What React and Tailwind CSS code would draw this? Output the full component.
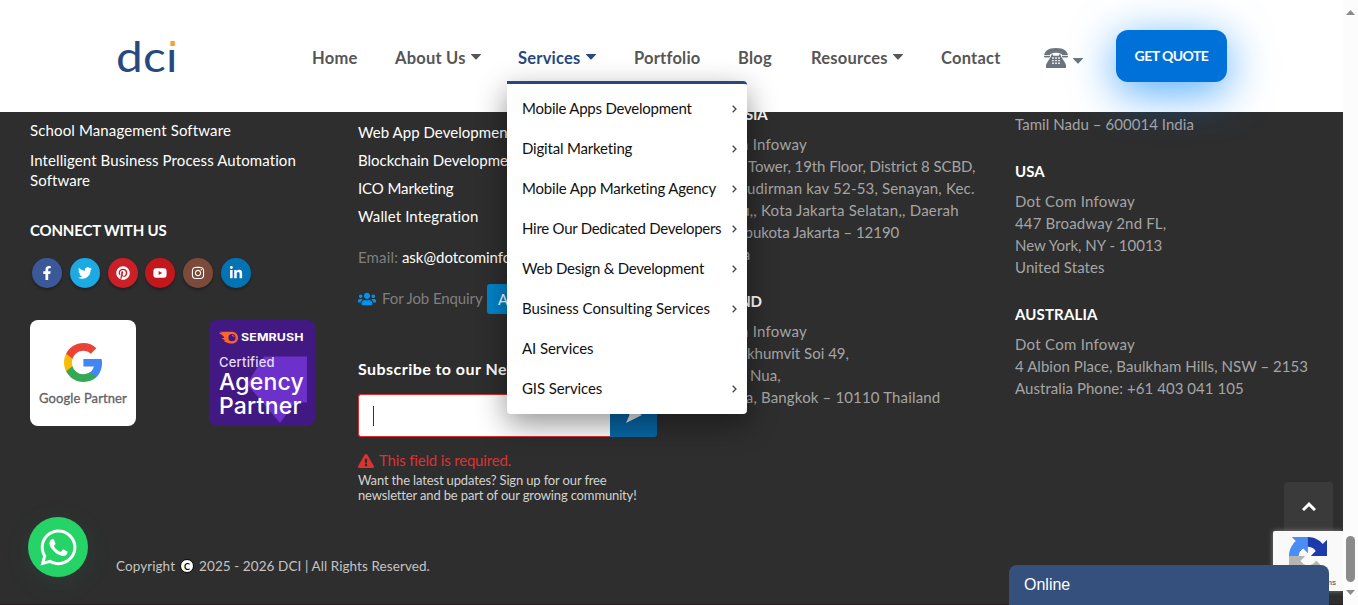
import React from 'react';
import {
  FaFacebookF, FaTwitter, FaPinterest, FaYoutube, FaInstagram, FaLinkedinIn,
  FaUsers, FaExclamationTriangle, FaWhatsapp,
} from 'react-icons/fa';

const NAV = [
  { label: 'Home', width: 'w-[83px]' },
  { label: 'About Us', width: 'w-[123px]', menu: true },
  { label: 'Services', width: 'w-[116px]', menu: true, active: true },
  { label: 'Portfolio', width: 'w-[104px]' },
  { label: 'Blog', width: 'w-[73px]' },
  { label: 'Resources', width: 'w-[130px]', menu: true },
  { label: 'Contact', width: 'w-[103px]' },
];

const SERVICES = [
  { label: 'Mobile Apps Development', sub: true, track: 'tracking-[-0.24px]' },
  { label: 'Digital Marketing', sub: true, track: 'tracking-[-0.18px]' },
  { label: 'Mobile App Marketing Agency', sub: true, track: 'tracking-[-0.18px]' },
  { label: 'Hire Our Dedicated Developers', sub: true, track: 'tracking-[-0.27px]' },
  { label: 'Web Design & Development', sub: true, track: 'tracking-[-0.23px]' },
  { label: 'Business Consulting Services', sub: true, track: 'tracking-[-0.06px]' },
  { label: 'AI Services', sub: false, track: 'tracking-[-0.1px]' },
  { label: 'GIS Services', sub: true, track: 'tracking-[-0.1px]' },
];

const SOCIAL = [
  { Icon: FaFacebookF, bg: 'bg-[#3b5998]' },
  { Icon: FaTwitter, bg: 'bg-[#1da9e1]' },
  { Icon: FaPinterest, bg: 'bg-[#cb2027]' },
  { Icon: FaYoutube, bg: 'bg-[#c4171d]' },
  { Icon: FaInstagram, bg: 'bg-[#7c4a3a]' },
  { Icon: FaLinkedinIn, bg: 'bg-[#0274b3]' },
];

function Caret() {
  return (
    <svg width="10" height="6" viewBox="0 0 10 6" fill="currentColor" className="shrink-0">
      <path d="M.4 0h9.200c.4 0 .5.4.2.7L5.600 5.300c-.4.4-.8.4-1.200 0L.2.7C-.1.4 0 0 .4 0z" />
    </svg>
  );
}

function Telephone() {
  return (
    <svg width="24" height="20" viewBox="0 0 24 20" fill="#6c757d">
      <path d="M0 8.600C0 3.200 4 0 12 0s12 3.200 12 8.600c0 .5-.3.8-.8.8h-4.400c-.5 0-.8-.3-.8-.8V6.500C16.500 5.300 14.500 4.800 12 4.800S7.500 5.300 6 6.500v2.100c0 .5-.3.8-.8.8H.8c-.5 0-.8-.3-.8-.8z" />
      <path d="M7.300 6.400h1.800v1.400h5.800V6.400h1.800v1.400l4.700 7.600c.4.7.6 1.200.6 2V20H2v-2.600c0-.8.2-1.300.6-2l4.700-7.600z" />
      <path fill="#fff" d="M8.200 9.300h1.600v1.400H8.200zM11.200 9.300h1.600v1.400h-1.600zM14.200 9.300h1.600v1.400h-1.600zM8.200 11.900h1.600v1.400H8.200zM11.200 11.900h1.600v1.400h-1.600zM14.200 11.900h1.600v1.400h-1.600zM8.200 14.500h1.600v1.400H8.200zM11.200 14.500h1.600v1.400h-1.600zM14.200 14.500h1.600v1.400h-1.600z" />
      <path fill="none" stroke="#fff" strokeWidth="0.8" d="M0 7.500h6.200M17.800 7.500H24" />
    </svg>
  );
}

function ServicesMenu() {
  return (
    <div className="absolute left-[507px] top-[81px] z-20 w-[240px] rounded-[4px] rounded-tl-none border-t-[3px] border-[#26477f] bg-white py-[5px] text-[15px] text-[#111] shadow-[0_10px_30px_rgba(0,0,0,0.42)]">
      {SERVICES.map((s) => (
        <div key={s.label} className="flex h-10 items-center justify-between pl-[15px] pr-[10px]">
          <span className={`whitespace-nowrap pb-[2px] ${s.track}`}>{s.label}</span>
          {s.sub && (
            <svg width="5" height="8" viewBox="0 0 5 8" fill="none" stroke="#444" strokeWidth="1.3">
              <path d="M.7.7 4 4 .7 7.300" />
            </svg>
          )}
        </div>
      ))}
    </div>
  );
}

function Header() {
  return (
    <header className="relative z-10 flex h-28 w-[1343px] shrink-0 bg-white">
      <div className="w-[312px] pl-[115.500px] pt-[32px] text-[43px] leading-[48px] text-[#27497f]">
        <div className="flex w-[60px] origin-left scale-x-[1.11] tracking-[0.2px]">
          <span>dc</span>
          <span className="relative">
            ı
            <span className="absolute left-[3.500px] top-[9px] h-[5px] w-[4px] bg-[#fb9f2d]" />
          </span>
        </div>
      </div>
      <nav className="flex h-28 items-center text-[16.500px] font-bold leading-6 tracking-[0.22px] text-[#565656]">
        {NAV.map((n) => (
          <div key={n.label} className={`flex items-center gap-[5px] pt-[1px] ${n.width} ${n.active ? 'text-[#27497f]' : ''}`}>
            <span className="whitespace-nowrap pt-[2px]">{n.label}</span>
            {n.menu && <Caret />}
          </div>
        ))}
      </nav>
      <div className="flex items-start gap-[5px] pt-[48px] text-[#6c757d]">
        <Telephone />
        <span className="pt-[10px]"><Caret /></span>
      </div>
      <button className="ml-[33px] mt-[30px] h-[52px] w-[111px] rounded-[12px] bg-[#0071d8] pb-[2px] text-[14px] font-bold tracking-[-0.55px] text-white shadow-[0_10px_45px_rgba(0,132,255,0.7)]">
        GET QUOTE
      </button>
    </header>
  );
}

function GooglePartner() {
  return (
    <div className="flex h-[106px] w-[106px] flex-col items-center rounded-[8px] bg-white pt-[23px]">
      <svg width="38" height="39" viewBox="1 1 21.560 22">
        <path fill="#4285f4" d="M22.56 12.25c0-.78-.07-1.53-.2-2.25H12v4.26h5.92c-.26 1.37-1.04 2.53-2.21 3.31v2.77h3.57c2.08-1.92 3.28-4.74 3.28-8.09z" />
        <path fill="#34a853" d="M12 23c2.97 0 5.46-.98 7.28-2.66l-3.57-2.77c-.98.66-2.23 1.06-3.71 1.06-2.86 0-5.29-1.93-6.16-4.53H2.18v2.84C3.99 20.53 7.7 23 12 23z" />
        <path fill="#fbbc05" d="M5.84 14.09c-.22-.66-.35-1.36-.35-2.09s.13-1.43.35-2.09V7.07H2.18C1.43 8.55 1 10.22 1 12s.43 3.45 1.18 4.93l2.85-2.22.81-.62z" />
        <path fill="#ea4335" d="M12 5.38c1.62 0 3.06.56 4.21 1.64l3.15-3.15C17.45 2.09 14.97 1 12 1 7.7 1 3.99 3.47 2.18 7.07l3.66 2.84c.87-2.6 3.3-4.53 6.16-4.53z" />
      </svg>
      <span className="mt-[8px] whitespace-nowrap text-[13px] leading-4 tracking-[0.1px] text-[#5f6368] [-webkit-text-stroke:0.3px_#5f6368]">Google Partner</span>
    </div>
  );
}

function SemrushPartner() {
  return (
    <div className="relative h-[106px] w-[106px] rounded-[8px] bg-[#421983] pl-[10px] pt-[10px] text-white [font-family:Inter,sans-serif]">
      <svg className="absolute left-0 top-0" width="106" height="106" viewBox="0 0 106 106">
        <path fill="#6d31cb" d="M55 36.500h43v46H86L71 103 38 64z" />
      </svg>
      <div className="relative flex items-center">
        <svg width="19" height="13" viewBox="0 0 19 13">
          <path fill="#ff642d" fillRule="evenodd" d="M.5.800h12C16.500.800 19 3.300 19 6.700s-2.600 5.800-6 5.800c-3 0-5.200-.9-7.800-2.300-.7-.4-.5-.9.200-.8l1.400.1L3.300 7.800c-.8-.4-.5-1 .2-.9l1.800.2C5 5.600 3.200 4 .6 2.600-.1 2.200 0 1.500.8 1.700l3 .5zM13 3.100a3.600 3.600 0 1 0 0 7.200 3.600 3.600 0 0 0 0-7.200z" />
          <path fill="#ff642d" d="M13 4c1.600 0 2.700 1.100 2.700 2.600-.7-.9-1.500-1.400-2.700-1.600z" />
        </svg>
        <span className="ml-[2.500px] origin-left scale-x-[1.24] text-[10px] font-bold leading-[14px] tracking-[0.1px]">SEMRUSH</span>
      </div>
      <div className="relative mt-[9px] text-[13px] font-medium leading-[18px] tracking-[0.2px] text-[#e6dcf5]">Certified</div>
      <div className="relative -mt-px text-[23px] font-medium leading-[24px] tracking-[0.2px]">
        <div>Agency</div>
        <div>Partner</div>
      </div>
    </div>
  );
}

function ProductsColumn() {
  return (
    <div className="pt-[8px] text-[15px] leading-5 text-white">
      <div className="tracking-[0.13px]">School Management Software</div>
      <div className="mt-[10px] w-[290px] tracking-[0.1px]">Intelligent Business Process Automation Software</div>
      <div className="mt-[30px] font-bold tracking-[-0.17px]">CONNECT WITH US</div>
      <div className="mt-[18px] flex gap-[7.800px] pl-[2px]">
        {SOCIAL.map(({ Icon, bg }) => (
          <span key={bg} className={`flex h-[30px] w-[30px] items-center justify-center rounded-full text-[14px] shadow-[0_2px_3px_rgba(0,0,0,0.3)] ${bg}`}>
            <Icon />
          </span>
        ))}
      </div>
      <div className="mt-[32px] flex gap-[73px]">
        <GooglePartner />
        <SemrushPartner />
      </div>
    </div>
  );
}

function ContactColumn() {
  return (
    <div className="pt-[6px] text-[15px] leading-7 text-white">
      <div className="tracking-[0.05px]">Web App Development</div>
      <div>Blockchain Development</div>
      <div className="tracking-[-0.1px]">ICO Marketing</div>
      <div className="tracking-[0.12px]">Wallet Integration</div>
      <div className="mt-[13px]"><span className="tracking-[0.15px] text-[#7f7f7f]">Email:</span> ask@dotcominfoway.com</div>
      <div className="mt-[13px] flex h-[30px] items-center text-[#7f7f7f]">
        <FaUsers className="text-[18px] text-[#0092ec]" />
        <span className="ml-[6px] w-[105px] whitespace-nowrap pb-[2px] tracking-[-0.1px]">For Job Enquiry</span>
        <span className="h-[30px] rounded-[3px] bg-[#0084cb] px-[11px] leading-[30px] text-white">Apply</span>
      </div>
      <div className="mt-[43px] text-[16px] font-bold leading-6 tracking-[0.45px]">Subscribe to our Newsletter</div>
      <div className="mt-[13px] flex h-[43px]">
        <div className="flex w-[252px] items-center rounded-l-[3px] border border-r-0 border-[#dc3030] bg-white pl-[14px]">
          <span className="h-5 w-px bg-[#333]" />
        </div>
        <div className="flex w-[47px] items-center justify-center rounded-r-[3px] bg-[#0768a8]">
          <svg width="16" height="16" viewBox="0 0 16 16" fill="#e8edf1" className="mt-[-2px]">
            <path d="M0 0l16 8L0 16l3.500-8z" />
          </svg>
        </div>
      </div>
      <div className="mt-[14px] flex h-5 items-center gap-[5px] tracking-[-0.17px] text-[#dc3232]">
        <FaExclamationTriangle className="text-[16px]" />
        <span className="pb-[2px]">This field is required.</span>
      </div>
      <div className="mt-[2px] text-[13px] leading-[15px] tracking-[-0.15px] text-[#d2d2d2]">
        <div>Want the latest updates? Sign up for our free</div>
        <div>newsletter and be part of our growing community!</div>
      </div>
    </div>
  );
}

function Lead({ children, className }) {
  return <span className={`flex shrink-0 justify-end ${className}`}>{children}</span>;
}

function AsiaColumn() {
  return (
    <div className="-mt-[9px] whitespace-nowrap text-[15px] leading-[22px] text-[#a5a5a5]">
      <div className="font-bold tracking-[-0.28px] text-white">INDONESIA</div>
      <div className="mt-[8px] tracking-[0.28px]">Dot Com Infoway</div>
      <div className="flex tracking-[-0.08px]"><Lead className="w-[61px] pr-1">Revenue</Lead>Tower, 19th Floor, District 8 SCBD,</div>
      <div className="flex tracking-[0.18px]"><Lead className="w-[60px]">Jl Jen S</Lead>udirman kav 52-53, Senayan, Kec.</div>
      <div className="flex tracking-[0.23px]"><Lead className="w-[70px]">Kby Baru,,</Lead><span className="pl-[4px]">Kota Jakarta Selatan,, Daerah</span></div>
      <div className="flex"><Lead className="w-[66px]">Khusus Ib</Lead><span className="tracking-[-0.03px]">ukota Jakarta – 12190</span></div>
      <div>Indonesia</div>
      <div className="mt-[25px] font-bold tracking-[-0.25px] text-white">THAILAND</div>
      <div className="mt-[8px] tracking-[0.28px]">Dot Com Infoway</div>
      <div className="flex"><Lead className="w-[60px]">45/1 Su</Lead>khumvit Soi 49,</div>
      <div className="flex"><Lead className="w-[63px] pr-1">Klongtan</Lead>Nua,</div>
      <div className="flex tracking-[0.15px]"><Lead className="w-[70px]">Wattana,</Lead><span className="pl-[4px]">Bangkok – 10110 Thailand</span></div>
    </div>
  );
}

function OfficesColumn() {
  return (
    <div className="whitespace-nowrap pt-[1px] text-[15px] leading-[22px] text-[#a5a5a5]">
      <div className="tracking-[0.05px]">Tamil Nadu – 600014 India</div>
      <div className="mt-[25px] font-bold text-white">USA</div>
      <div className="mt-[8px] tracking-[0.28px]">Dot Com Infoway</div>
      <div className="tracking-[0.16px]">447 Broadway 2nd FL,</div>
      <div>New York, NY - 10013</div>
      <div className="tracking-[0.08px]">United States</div>
      <div className="mt-[25px] font-bold tracking-[0.15px] text-white">AUSTRALIA</div>
      <div className="mt-[8px] tracking-[0.28px]">Dot Com Infoway</div>
      <div className="tracking-[0.05px]">4 Albion Place, Baulkham Hills, NSW – 2153</div>
      <div className="tracking-[0.05px]">Australia Phone: +61 403 041 105</div>
    </div>
  );
}

function Recaptcha() {
  return (
    <div className="absolute left-[1273px] top-[531px] h-[60px] w-[70px] rounded-l-[2px] bg-[#f9f9f9] pl-[16px] pt-[6px] shadow-[0_0_5px_#808080]">
      <svg width="38" height="38" viewBox="0 0 64 64">
        <path fill="#1c3aa9" d="M64 31.955l-.033-1.370V4.687l-7.160 7.160C50.948 4.674 42.033.093 32.050.093c-10.400 0-19.622 4.960-25.458 12.640l11.736 11.860a15.550 15.550 0 0 1 4.754-5.334c2.050-1.600 4.952-2.906 8.968-2.906.485 0 .860.057 1.135.163 4.976.393 9.288 3.140 11.828 7.124l-8.307 8.307L64 31.953" />
        <path fill="#4a8df6" d="M31.862.094l-1.370.033H4.594l7.160 7.160C4.580 13.147 0 22.060 0 32.046c0 10.400 4.960 19.622 12.640 25.458L24.500 45.768a15.550 15.550 0 0 1-5.334-4.754c-1.600-2.050-2.906-4.952-2.906-8.968 0-.485.057-.860.163-1.135.393-4.976 3.140-9.288 7.124-11.828l8.307 8.307L31.860.095" />
        <path fill="#b5b5b5" d="M.001 32.045l.033 1.370v25.898l7.160-7.160c5.860 7.173 14.774 11.754 24.760 11.754 10.400 0 19.622-4.960 25.458-12.640l-11.736-11.860a15.550 15.550 0 0 1-4.754 5.334c-2.050 1.600-4.952 2.906-8.968 2.906-.485 0-.860-.057-1.135-.163-4.976-.393-9.288-3.140-11.828-7.124l8.307-8.307c-10.522.040-22.400.066-27.295-.005" />
      </svg>
      <div className="absolute right-[7px] top-[47px] whitespace-nowrap text-[8px] leading-[10px] text-[#444] [font-family:'Liberation_Sans',sans-serif]">Terms</div>
    </div>
  );
}

export default function App() {
  return (
    <div className="relative flex h-[605px] w-[1358px] overflow-hidden bg-[#fcfcfc] [font-family:Lato,sans-serif]">
      <div className="flex w-[1343px] flex-col">
        <Header />
        <footer className="flex h-[493px] flex-col border-b border-[#241f21] bg-[#2e2e2e]">
          <div className="grid h-[442px] grid-cols-[328px_329px_328px_328px] items-start pl-[30px]">
            <ProductsColumn />
            <ContactColumn />
            <AsiaColumn />
            <OfficesColumn />
          </div>
          <div className="flex h-6 items-center pl-[116px] text-[13.500px] text-[#c4c4c4]">
            <span className="tracking-[0.08px]">Copyright</span>
            <span className="ml-[5px] mr-[5px] flex h-[14px] w-[14px] items-center justify-center rounded-full border border-black bg-white text-[9px] font-bold leading-none text-black">C</span>
            <span className="tracking-[0.08px]">2025 - 2026 DCI | All Rights Reserved.</span>
          </div>
        </footer>
      </div>

      <div className="flex w-[15px] flex-col items-center pt-[10px] text-[#8b8b8b]">
        <svg width="9" height="5" viewBox="0 0 9 5" fill="currentColor"><path d="M0 5 4.500 0 9 5z" /></svg>
        <span className="mt-[521px] h-[46px] w-[9px] rounded-full bg-[#8b8b8b]" />
        <svg className="mt-[8px]" width="9" height="5" viewBox="0 0 9 5" fill="currentColor"><path d="M0 0h9L4.500 5z" /></svg>
      </div>

      <ServicesMenu />

      <div className="absolute left-[28px] top-[517px] flex h-[60px] w-[60px] items-center justify-center rounded-full bg-[#25d366] text-white shadow-[0_6px_24px_rgba(37,140,110,0.15)]">
        <FaWhatsapp className="text-[41px]" />
      </div>

      <div className="absolute left-[1284px] top-[482px] flex h-[50px] w-[49px] items-center justify-center rounded-t-[4px] bg-[#3a3a3a]">
        <svg width="14" height="9" viewBox="0 0 14 9" fill="none" stroke="#fff" strokeWidth="3" className="mb-[1px]">
          <path d="M1 8l6-5.800L13 8" />
        </svg>
      </div>

      <div className="pointer-events-none absolute left-0 top-0 h-[605px] w-[1343px] overflow-hidden">
        <Recaptcha />
        <div className="absolute left-[1009px] top-[565px] h-[40px] w-[320px] rounded-t-[8px] bg-[#35507d] pl-[15px] text-[16px] leading-[39px] text-white [font-family:'Liberation_Sans',sans-serif]">
          Online
        </div>
      </div>
    </div>
  );
}
